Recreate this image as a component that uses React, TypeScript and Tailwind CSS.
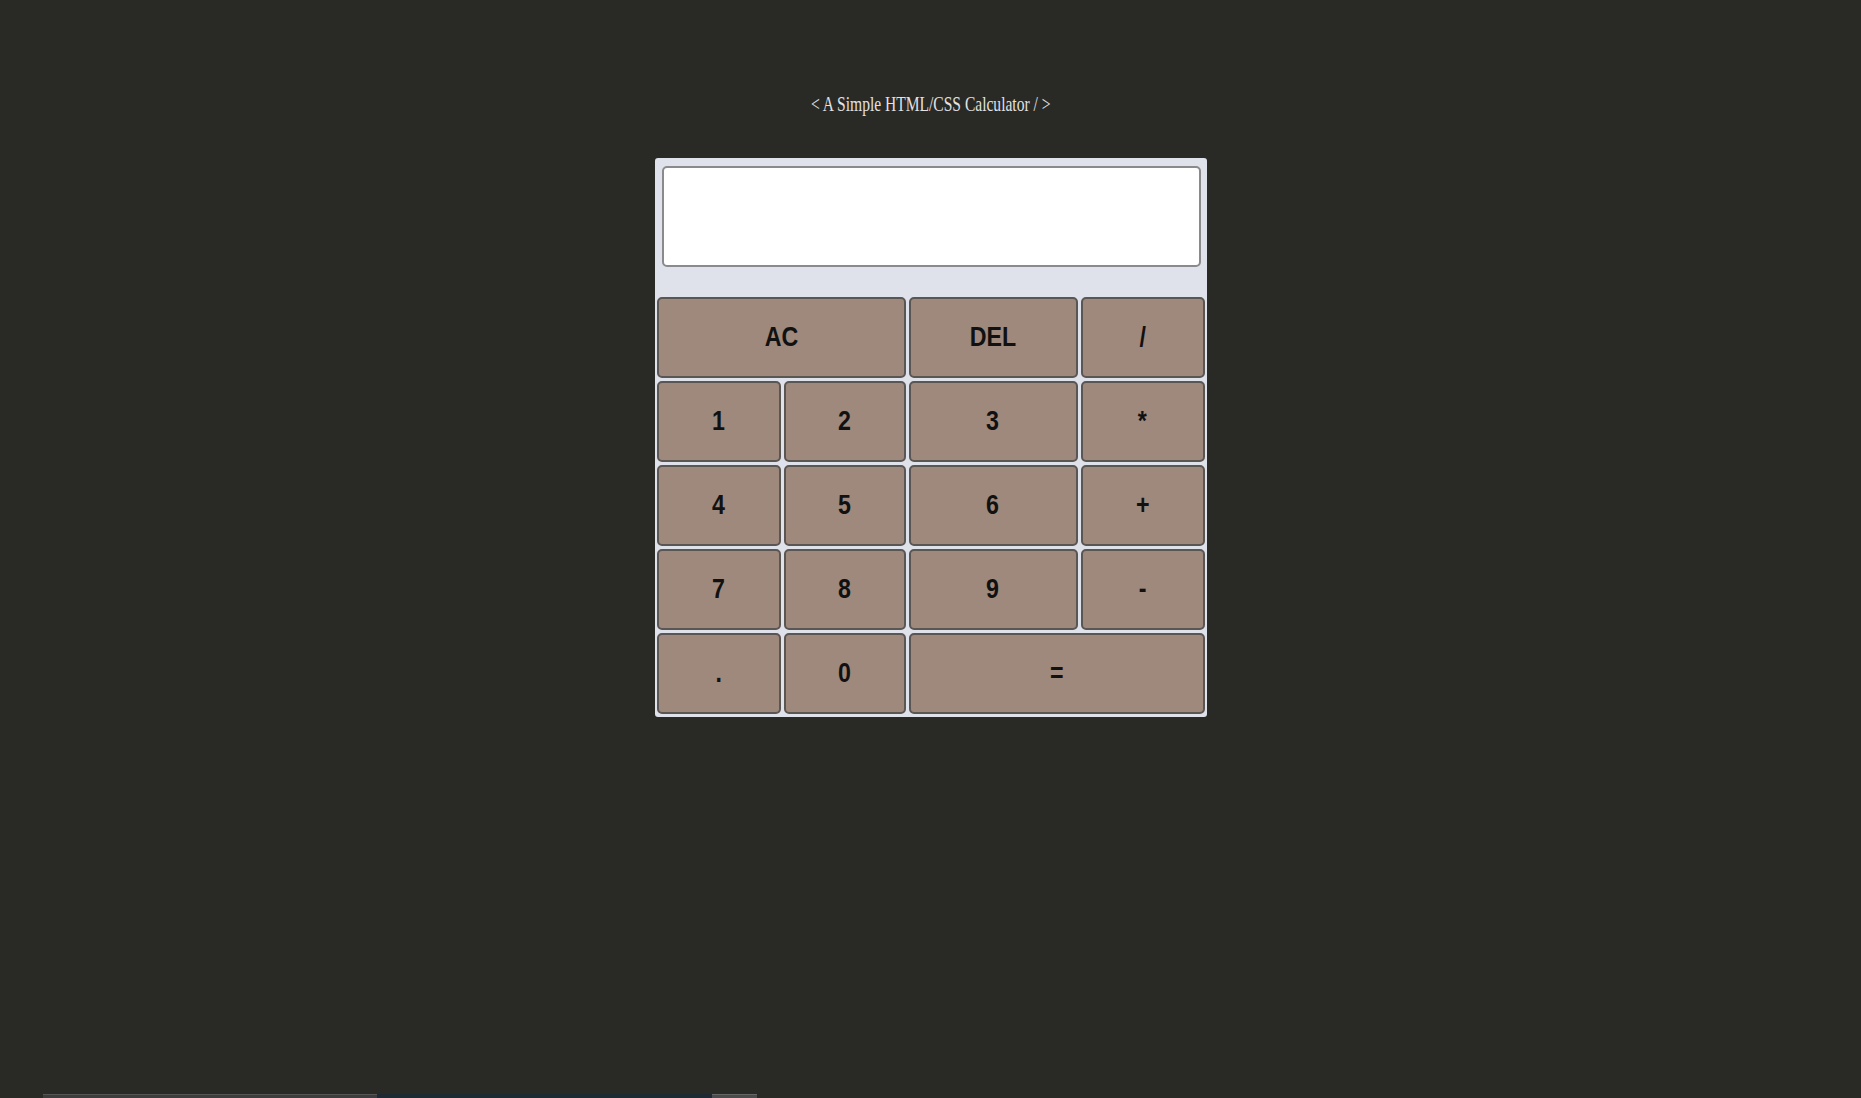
import React from "react"

type Key = { label: string; span?: string }

const rows: Key[][] = [
  [{ label: "AC", span: "col-span-2" }, { label: "DEL" }, { label: "/" }],
  [{ label: "1" }, { label: "2" }, { label: "3" }, { label: "*" }],
  [{ label: "4" }, { label: "5" }, { label: "6" }, { label: "+" }],
  [{ label: "7" }, { label: "8" }, { label: "9" }, { label: "-" }],
  [{ label: "." }, { label: "0" }, { label: "=", span: "col-span-2" }],
]

function CalcButton({ label, span }: Key) {
  return (
    <button
      className={`${span ?? ""} h-[81px] rounded-[5px] border-2 border-[#5a5653] bg-[#9e897c] text-[#111] font-bold text-[27px] leading-none flex items-center justify-center`}
      style={{ fontFamily: '"Liberation Sans", Arial, sans-serif' }}
    >
      <span className="inline-block scale-x-[0.86]">{label}</span>
    </button>
  )
}

export default function App() {
  return (
    <div className="w-full h-[1098px] bg-[#292926] flex flex-col items-center overflow-hidden">
      {/* title */}
      <div
        className="pt-[94px] h-[158px] text-[#e2e2e2] text-[21px] leading-none"
        style={{ fontFamily: '"Liberation Serif", "Times New Roman", serif' }}
      >
        <span className="inline-block scale-x-[0.74]">&lt; A Simple HTML/CSS Calculator / &gt;</span>
      </div>

      {/* calculator */}
      <div className="w-[552px] rounded-[3px] bg-[#dfe2ea] pt-[8px] pb-[3px]">
        <div className="ml-[7px] mr-[6px] h-[101px] rounded-[5px] border-2 border-[#8a8a8c] bg-white" />
        <div className="mt-[30px] px-[2px] grid grid-cols-[124px_122px_169px_124px] gap-[3px]">
          {rows.flat().map((k, i) => (
            <CalcButton key={i} {...k} />
          ))}
        </div>
      </div>

      {/* bottom strip */}
      <div className="mt-auto w-full h-[4px] flex">
        <div className="w-[43px]" />
        <div className="w-[334px] bg-[#3c3d3c] border-t border-[#555]" />
        <div className="w-[335px] bg-[#1d2a33]" />
        <div className="w-[45px] bg-[#4b4b4b] border-t border-[#666]" />
      </div>
    </div>
  )
}
